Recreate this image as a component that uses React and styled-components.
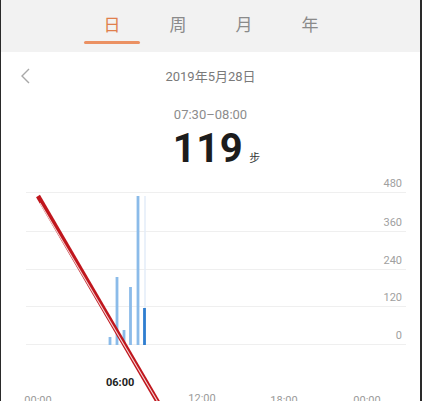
import React from 'react'
import styled, { createGlobalStyle } from 'styled-components'

const GlobalStyle = createGlobalStyle`
  body {
    margin: 0;
    background: #fff;
    font-family: Roboto, "Noto Sans CJK SC", sans-serif;
  }
`

const StyledScreen = styled.div`
  position: relative;
  width: 422px;
  height: 401px;
  box-sizing: border-box;
  overflow: hidden;
  background: #fff;
  border-left: 1px solid #2a2a2a;
  border-right: 2px solid #2a2a2a;
`

const StyledTabBar = styled.div`
  height: 52px;
  background: #f2f2f2;
  display: flex;
  justify-content: center;
  gap: 10px;
  padding-left: 1px;
`

const StyledTab = styled.div`
  width: 56px;
  display: flex;
  flex-direction: column;
  align-items: center;
  padding-top: 14px;
  box-sizing: border-box;
  font-size: 17px;
  line-height: 22px;
  color: ${(p) => (p.active ? '#e07f4c' : '#8a8a8a')};
  &::after {
    content: '';
    margin-top: 5px;
    width: 56px;
    height: 3px;
    border-radius: 2px;
    background: ${(p) => (p.active ? '#eb9163' : 'transparent')};
  }
`

const StyledDateRow = styled.div`
  position: relative;
  height: 46px;
  display: flex;
  align-items: center;
  justify-content: center;
  font-size: 13px;
  color: #7a7a7a;
  svg {
    position: absolute;
    left: 19px;
    top: 15px;
  }
`

const StyledRange = styled.div`
  margin-top: 6px;
  text-align: center;
  font-size: 13px;
  line-height: 22px;
  color: #8c8c8c;
`

const StyledTotal = styled.div`
  display: flex;
  justify-content: center;
  align-items: baseline;
  gap: 6px;
  height: 44px;
  padding: 2px 0 0 12px;
  box-sizing: border-box;
  strong {
    font-size: 40px;
    line-height: 42px;
    font-weight: 700;
    color: #1c1c1c;
    letter-spacing: 0.5px;
  }
  span {
    font-size: 11px;
    color: #333;
  }
`

const StyledChart = styled.div`
  position: relative;
  margin: 0 14px 0 25px;
`

const StyledGridRow = styled.div`
  height: ${(p) => p.h}px;
  box-sizing: border-box;
  border-bottom: 1px solid #efefef;
  display: flex;
  justify-content: flex-end;
  align-items: flex-end;
  padding: 0 4px 2px 0;
  font-size: 11px;
  line-height: 13px;
  color: #a0a0a0;
`

const StyledBars = styled.svg`
  position: absolute;
  left: -25px;
  top: 0;
`

const StyledCursor = styled.div`
  margin: 31px 0 0 80px;
  font-size: 11px;
  font-weight: 700;
  color: #222;
  line-height: 13px;
`

const StyledAxis = styled.div`
  display: flex;
  margin-top: 3px;
  font-size: 11px;
  color: #9a9a9a;
  line-height: 13px;
  span {
    position: relative;
    width: 0;
    display: flex;
    justify-content: center;
    white-space: nowrap;
  }
`

const StyledMark = styled.svg`
  position: absolute;
  left: 0;
  top: 0;
  pointer-events: none;
`

const tabs = ['日', '周', '月', '年']
const rows = [
  { label: '480', h: 23 },
  { label: '360', h: 39 },
  { label: '240', h: 38 },
  { label: '120', h: 37 },
  { label: '0', h: 38 },
]
const bars = [
  { x: 109, top: 337 },
  { x: 116, top: 277 },
  { x: 123, top: 330 },
  { x: 129.5, top: 287 },
  { x: 137, top: 196 },
  { x: 143.5, top: 308, active: true },
]
const axis = [
  { t: '00:00', x: 12, dy: 2 },
  { t: '12:00', x: 176, dy: 0 },
  { t: '18:00', x: 258, dy: 2 },
  { t: '00:00', x: 341, dy: 2 },
]

const App = () => {
  const chartTop = 170
  return (
    <StyledScreen>
      <GlobalStyle />
      <StyledTabBar>
        {tabs.map((t, i) => (
          <StyledTab key={t} active={i === 0}>
            {t}
          </StyledTab>
        ))}
      </StyledTabBar>
      <StyledDateRow>
        <svg width='12' height='18' viewBox='0 0 12 18'>
          <path d='M9 2 L2 9 L9 16' fill='none' stroke='#a8a8a8' strokeWidth='1.4' />
        </svg>
        2019年5月28日
      </StyledDateRow>
      <StyledRange>07:30–08:00</StyledRange>
      <StyledTotal>
        <strong>119</strong>
        <span>步</span>
      </StyledTotal>
      <StyledChart>
        {rows.map((r) => (
          <StyledGridRow key={r.label} h={r.h}>
            {r.label}
          </StyledGridRow>
        ))}
        <StyledBars width='180' height='180'>
          <line x1='144' y1={196 - chartTop} x2='144' y2={345 - chartTop} stroke='#e3edf8' strokeWidth='1.5' />
          {bars.map((b, i) => (
            <rect
              key={i}
              x={b.x - 1.4}
              y={b.top - chartTop}
              width='2.8'
              height={345 - b.top}
              fill={b.active ? '#2f7ed0' : '#8bbbe9'}
            />
          ))}
        </StyledBars>
        <StyledCursor>06:00</StyledCursor>
        <StyledAxis>
          {axis.map((a, i) => (
            <span key={i} style={{ marginLeft: i === 0 ? a.x : a.x - axis[i - 1].x, top: a.dy }}>
              {a.t}
            </span>
          ))}
        </StyledAxis>
      </StyledChart>
      <StyledMark width='422' height='401'>
        <line x1='37' y1='196' x2='158' y2='404' stroke='#c0161d' strokeWidth='4.5' />
        <line x1='39' y1='203' x2='158' y2='404' stroke='#f3d6d6' strokeWidth='1.1' />
      </StyledMark>
    </StyledScreen>
  )
}

export default App
